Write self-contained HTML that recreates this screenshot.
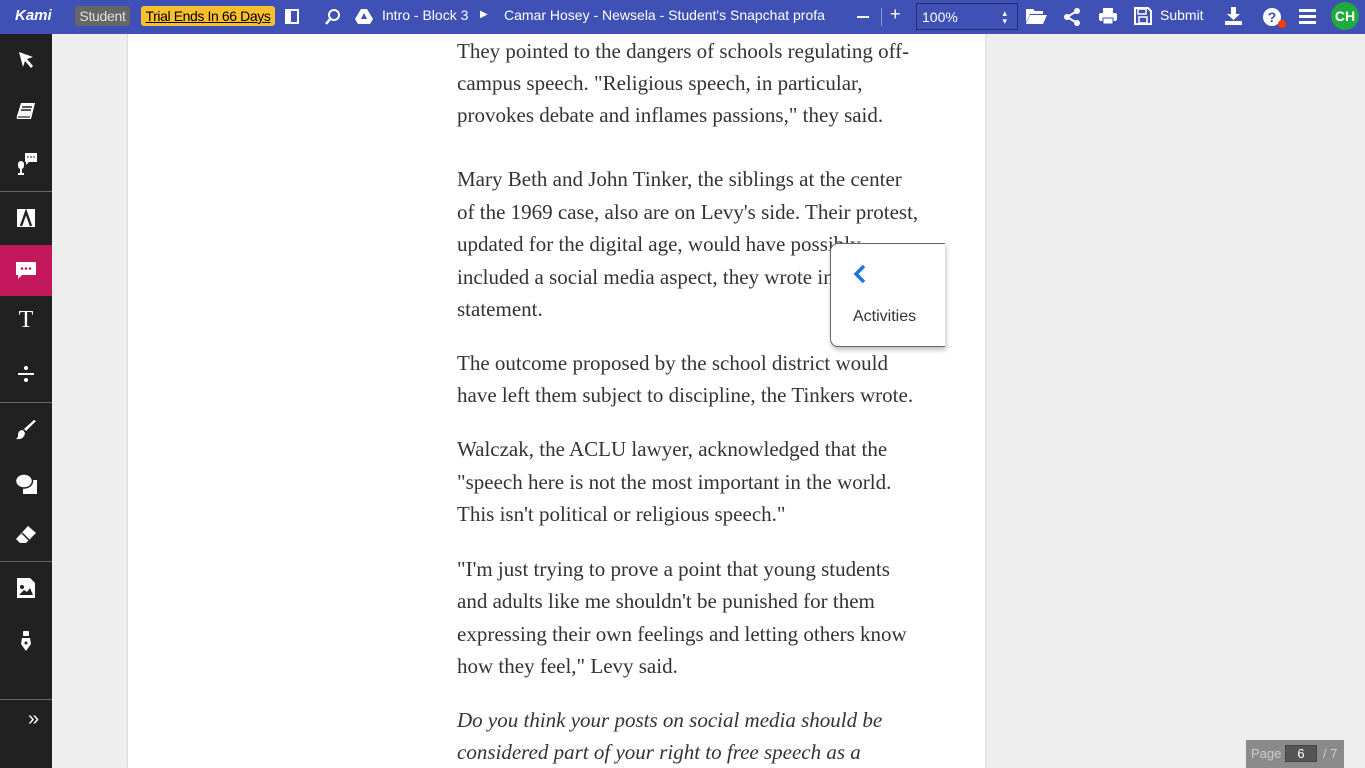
<!DOCTYPE html>
<html><head><meta charset="utf-8"><style>
*{margin:0;padding:0;box-sizing:border-box}
body{width:1365px;height:768px;overflow:hidden;background:#eeeeee;font-family:"Liberation Sans",sans-serif;position:relative}
#top{position:absolute;left:0;top:0;width:1365px;height:34px;background:#3f51b5;color:#fff;font-size:14px}
#top .t{position:absolute;top:7px;white-space:nowrap}
#side{position:absolute;left:0;top:34px;width:52px;height:734px;background:#212121}
.sep{position:absolute;left:0;width:52px;height:1px;background:#666}
.ic{position:absolute;left:14px;width:24px;height:24px}
#paper{position:absolute;left:128px;top:34px;width:857px;height:734px;background:#fff;box-shadow:0 0 2px #bbb}
.l{position:absolute;left:457px;white-space:nowrap;font-family:"Liberation Serif",serif;font-size:21px;color:#333;line-height:22px}
</style></head><body>
<div id="paper"></div>
<div class="l" style="top:40px">They pointed to the dangers of schools regulating off-</div>
<div class="l" style="top:72px">campus speech. "Religious speech, in particular,</div>
<div class="l" style="top:104px">provokes debate and inflames passions," they said.</div>
<div class="l" style="top:168px">Mary Beth and John Tinker, the siblings at the center</div>
<div class="l" style="top:201px">of the 1969 case, also are on Levy's side. Their protest,</div>
<div class="l" style="top:233px">updated for the digital age, would have possibly</div>
<div class="l" style="top:266px">included a social media aspect, they wrote in</div>
<div class="l" style="top:298px">statement.</div>
<div class="l" style="top:352px">The outcome proposed by the school district would</div>
<div class="l" style="top:384px">have left them subject to discipline, the Tinkers wrote.</div>
<div class="l" style="top:438px">Walczak, the ACLU lawyer, acknowledged that the</div>
<div class="l" style="top:471px">"speech here is not the most important in the world.</div>
<div class="l" style="top:503px">This isn't political or religious speech."</div>
<div class="l" style="top:558px">"I'm just trying to prove a point that young students</div>
<div class="l" style="top:590px">and adults like me shouldn't be punished for them</div>
<div class="l" style="top:623px">expressing their own feelings and letting others know</div>
<div class="l" style="top:655px">how they feel," Levy said.</div>
<div class="l" style="top:709px;font-style:italic">Do you think your posts on social media should be</div>
<div class="l" style="top:741px;font-style:italic">considered part of your right to free speech as a</div>

<div style="position:absolute;left:830px;top:243px;width:115px;height:104px;background:#fff;border:1px solid #666;border-right:none;border-radius:8px 0 0 8px;box-shadow:1px 3px 5px rgba(0,0,0,.25)">
<svg style="position:absolute;left:22px;top:20px" width="14" height="20" viewBox="0 0 14 20"><path d="M11 2 L3 10 L11 18" stroke="#1a73e8" stroke-width="3.5" fill="none"/></svg>
<div style="position:absolute;left:22px;top:64px;font-size:16px;color:#333">Activities</div>
</div>

<div style="position:absolute;left:1246px;top:740px;width:98px;height:28px;background:#8a8a8a;font-size:13px;color:#ccc">
<span style="position:absolute;left:5px;top:6px">Page</span>
<div style="position:absolute;left:39px;top:5px;width:32px;height:17px;background:#555;border:1px solid #444;color:#fff;text-align:center;font-size:13px;line-height:15px">6</div>
<span style="position:absolute;left:77px;top:6px">/ 7</span>
</div>

<div id="side">
<svg class="ic" style="top:14px" viewBox="0 0 24 24"><path d="M5 4 L19 9 L13 11 L19 18 L17 20 L11 13 L9 19 Z" fill="#fff"/></svg>
<svg class="ic" style="top:66px" viewBox="0 0 24 24"><path d="M7 3 H21 L17 19 H4 Q2 19 3 16 Z" fill="#fff"/><path d="M8 7 H18 M7 10 H17" stroke="#212121" stroke-width="1.5"/><path d="M4 17 H16" stroke="#212121" stroke-width="1.2"/></svg>
<svg class="ic" style="top:118px" viewBox="0 0 24 24"><rect x="11" y="1" width="12" height="9" fill="#fff"/><path d="M13 5h2M16 5h2M19 5h2" stroke="#212121"/><path d="M12 10 L12 13 L15 10Z" fill="#fff"/><rect x="4" y="9" width="6" height="8" rx="3" fill="#fff"/><rect x="6" y="17" width="2" height="4" fill="#fff"/><rect x="4" y="21" width="6" height="2" fill="#fff"/></svg>
<div class="sep" style="top:157px"></div>
<svg class="ic" style="top:172px" viewBox="0 0 24 24"><rect x="3" y="3" width="18" height="18" fill="#fff"/><path d="M7 20 L12 6 L17 20" stroke="#212121" stroke-width="2.4" fill="none"/></svg>
<div style="position:absolute;left:0;top:211px;width:52px;height:51px;background:#c2185b"></div>
<svg class="ic" style="top:224px" viewBox="0 0 24 24"><path d="M2 4 H22 V17 H8 L4 21 V17 H2 Z" fill="#fff"/><circle cx="8" cy="10.5" r="1.3" fill="#c2185b"/><circle cx="12" cy="10.5" r="1.3" fill="#c2185b"/><circle cx="16" cy="10.5" r="1.3" fill="#c2185b"/></svg>
<div style="position:absolute;left:14px;top:273px;width:24px;text-align:center;font-family:'Liberation Serif',serif;font-size:24px;color:#fff">T</div>
<svg class="ic" style="top:328px" viewBox="0 0 24 24"><circle cx="12" cy="6" r="2" fill="#fff"/><rect x="4" y="11" width="16" height="2" fill="#fff"/><circle cx="12" cy="18" r="2" fill="#fff"/></svg>
<div class="sep" style="top:368px"></div>
<svg class="ic" style="top:384px" viewBox="0 0 24 24"><path d="M22 3 L12 13 L10 11 L20 2 Z" fill="#fff"/><path d="M9 12 Q4 12 4 17 Q4 20 2 21 Q10 22 11 15 Z" fill="#fff"/></svg>
<svg class="ic" style="top:437px" viewBox="0 0 24 24"><rect x="9" y="9" width="14" height="14" fill="#fff"/><ellipse cx="10" cy="10" rx="8.5" ry="7" fill="#fff" stroke="#212121" stroke-width="1.5"/></svg>
<svg class="ic" style="top:489px" viewBox="0 0 24 24"><path d="M14 3 L22 10 L12 20 H6 L2 16 Z" fill="#fff"/><path d="M8 10 L15 17" stroke="#212121" stroke-width="1.5"/></svg>
<div class="sep" style="top:527px"></div>
<svg class="ic" style="top:542px" viewBox="0 0 24 24"><path d="M3 2 H16 L21 7 V22 H3 Z" fill="#fff"/><circle cx="8" cy="11" r="2" fill="#212121"/><path d="M5 19 L10 14 L13 16 L16 12 L19 19 Z" fill="#212121"/></svg>
<svg class="ic" style="top:595px" viewBox="0 0 24 24"><rect x="9" y="2" width="6" height="5" rx="1" fill="#fff"/><path d="M8 9 H16 L17 15 L12 22 L7 15 Z" fill="#fff"/><circle cx="12" cy="14" r="1.5" fill="#212121"/></svg>
<div class="sep" style="top:665px"></div>
<div style="position:absolute;left:28px;top:674px;color:#fff;font-size:20px">»</div>
</div>

<div id="top">
<div class="t" style="left:15px;font-weight:bold;font-style:italic;font-size:15px">Kami</div>
<div style="position:absolute;left:75px;top:6px;width:55px;height:20px;background:#666;border-radius:3px;color:#e0e0e0;font-size:14px;text-align:center;line-height:20px;letter-spacing:-0.3px">Student</div>
<div style="position:absolute;left:141px;top:6px;width:134px;height:20px;background:#fbc02d;border-radius:3px;color:#000;font-size:14px;text-align:center;line-height:20px;text-decoration:underline;letter-spacing:-0.4px">Trial Ends In 66 Days</div>
<div style="position:absolute;left:285px;top:9px;width:14px;height:15px;border:2px solid #fff"><div style="width:4px;height:11px;background:#fff"></div></div>
<svg style="position:absolute;left:324px;top:8px" width="18" height="18" viewBox="0 0 18 18"><circle cx="10" cy="7" r="5" stroke="#fff" stroke-width="2" fill="none"/><path d="M7 10 L2 16" stroke="#fff" stroke-width="2.5"/></svg>
<svg style="position:absolute;left:355px;top:8px" width="18" height="17" viewBox="0 0 18 17"><path d="M6 1 H12 L18 11 L15 16 H3 L0 11 Z" fill="#fff"/><path d="M9 5 L6 11 H12 Z" fill="#3f51b5"/></svg>
<div class="t" style="left:382px">Intro - Block 3</div>
<div class="t" style="left:480px;font-size:10px;top:9px">▶</div>
<div class="t" style="left:504px;width:327px;overflow:hidden">Camar Hosey - Newsela - Student's Snapchat profa</div>
<div style="position:absolute;left:857px;top:16px;width:12px;height:2px;background:#fff"></div>
<div style="position:absolute;left:881px;top:8px;width:1px;height:18px;background:#8c98d6"></div>
<div class="t" style="left:890px;font-size:18px;top:4px">+</div>
<div style="position:absolute;left:916px;top:3px;width:102px;height:27px;border:1px solid #222c6e;background:#3f51b5;padding:5px 5px;font-size:14px">100%<span style="position:absolute;right:10px;top:5px;font-size:9px;line-height:8px">▴<br>▾</span></div>
<svg style="position:absolute;left:1026px;top:8px" width="21" height="17" viewBox="0 0 21 17"><path d="M0 1 H7 L9 3 H17 V6 H4 L0 15 Z" fill="#fff"/><path d="M4 7 H21 L17 16 H0 Z" fill="#fff"/></svg>
<svg style="position:absolute;left:1063px;top:7px" width="18" height="20" viewBox="0 0 18 20"><circle cx="14" cy="4" r="3" fill="#fff"/><circle cx="4" cy="10" r="3" fill="#fff"/><circle cx="14" cy="16" r="3" fill="#fff"/><path d="M14 4 L4 10 L14 16" stroke="#fff" stroke-width="2" fill="none"/></svg>
<svg style="position:absolute;left:1099px;top:7px" width="18" height="18" viewBox="0 0 18 18"><rect x="4" y="1" width="10" height="5" fill="#fff"/><rect x="0" y="6" width="18" height="8" rx="2" fill="#fff"/><rect x="4" y="11" width="10" height="6" fill="#fff" stroke="#3f51b5"/></svg>
<svg style="position:absolute;left:1134px;top:7px" width="18" height="18" viewBox="0 0 18 18"><path d="M1 1 H14 L17 4 V17 H1 Z" stroke="#fff" stroke-width="2" fill="none"/><rect x="4" y="2" width="8" height="5" stroke="#fff" stroke-width="1.5" fill="none"/><rect x="5" y="10" width="8" height="6" stroke="#fff" stroke-width="1.5" fill="none"/></svg>
<div class="t" style="left:1160px">Submit</div>
<svg style="position:absolute;left:1224px;top:6px" width="19" height="20" viewBox="0 0 19 20"><path d="M7 1 H12 V8 H16 L9.5 14 L3 8 H7 Z" fill="#fff"/><rect x="1" y="15" width="17" height="4" fill="#fff"/></svg>
<div style="position:absolute;left:1263px;top:8px;width:18px;height:18px;border-radius:50%;background:#fff;color:#3f51b5;font-weight:bold;font-size:14px;text-align:center;line-height:18px">?</div>
<div style="position:absolute;left:1278px;top:20px;width:8px;height:8px;border-radius:50%;background:#ff3d00"></div>
<div style="position:absolute;left:1299px;top:9px;width:17px;height:3px;background:#fff;box-shadow:0 6px 0 #fff,0 12px 0 #fff"></div>
<div style="position:absolute;left:1331px;top:2px;width:28px;height:28px;border-radius:50%;background:#1faa3e;font-weight:bold;font-size:14px;text-align:center;line-height:28px">CH</div>
</div>
</body></html>
